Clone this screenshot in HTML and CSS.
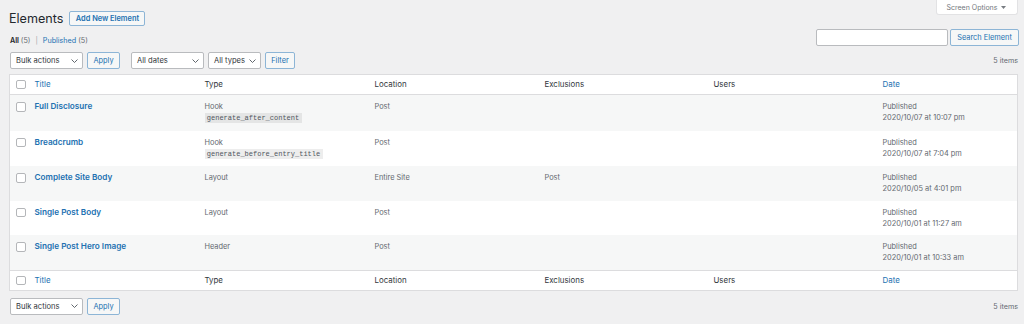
FILE: index.html
```html
<!DOCTYPE html>
<html lang="en">
<head>
<meta charset="utf-8">
<title>Elements</title>
<link rel="stylesheet" href="styles.css">
</head>
<body>
<div class="wrap">
  <div class="top">
    <div class="top-left">
      <div class="heading-row">
        <h1 class="page-title">Elements</h1>
        <a class="btn btn-add">Add New Element</a>
      </div>
      <ul class="subsubsub">
        <li class="current">All <span class="count">(5)</span></li>
        <li class="sep">|</li>
        <li><a class="link">Published</a> <span class="count">(5)</span></li>
      </ul>
    </div>
    <div class="top-right">
      <div class="screen-options">Screen Options
        <svg class="tri" width="5" height="3" viewBox="0 0 5 3"><polygon points="0,0 5,0 2.5,3" fill="#787c82"/></svg>
      </div>
      <div class="search-box">
        <div class="search-input"></div>
        <a class="btn">Search Element</a>
      </div>
    </div>
  </div>

  <div class="tablenav">
    <div class="group">
      <div class="select w-bulk"><span>Bulk actions</span><svg class="chev" width="7" height="4" viewBox="0 0 7 4"><polyline points="0.5,0.5 3.5,3.5 6.5,0.5" fill="none" stroke="#50575e" stroke-width="0.9"/></svg></div>
      <a class="btn btn-apply">Apply</a>
    </div>
    <div class="group group-filters">
      <div class="select w-dates"><span>All dates</span><svg class="chev" width="7" height="4" viewBox="0 0 7 4"><polyline points="0.5,0.5 3.5,3.5 6.5,0.5" fill="none" stroke="#50575e" stroke-width="0.9"/></svg></div>
      <div class="select w-types"><span>All types</span><svg class="chev" width="7" height="4" viewBox="0 0 7 4"><polyline points="0.5,0.5 3.5,3.5 6.5,0.5" fill="none" stroke="#50575e" stroke-width="0.9"/></svg></div>
      <a class="btn btn-filter">Filter</a>
    </div>
    <div class="num">5 items</div>
  </div>

  <table class="widefat">
    <colgroup>
      <col class="c-cb"><col class="c-col"><col class="c-col"><col class="c-col"><col class="c-col2"><col class="c-col2"><col>
    </colgroup>
    <thead>
      <tr>
        <th class="cb"><span class="checkbox"></span></th>
        <th><a class="link">Title</a></th>
        <th>Type</th>
        <th>Location</th>
        <th>Exclusions</th>
        <th>Users</th>
        <th><a class="link">Date</a></th>
      </tr>
    </thead>
    <tbody>
      <tr class="alt">
        <td class="cb"><span class="checkbox"></span></td>
        <td><a class="row-title">Full Disclosure</a></td>
        <td>Hook<br><code>generate_after_content</code></td>
        <td>Post</td>
        <td></td>
        <td></td>
        <td>Published<br>2020/10/07 at 10:07 pm</td>
      </tr>
      <tr>
        <td class="cb"><span class="checkbox"></span></td>
        <td><a class="row-title">Breadcrumb</a></td>
        <td>Hook<br><code>generate_before_entry_title</code></td>
        <td>Post</td>
        <td></td>
        <td></td>
        <td>Published<br>2020/10/07 at 7:04 pm</td>
      </tr>
      <tr class="alt">
        <td class="cb"><span class="checkbox"></span></td>
        <td><a class="row-title">Complete Site Body</a></td>
        <td>Layout</td>
        <td>Entire Site</td>
        <td>Post</td>
        <td></td>
        <td>Published<br>2020/10/05 at 4:01 pm</td>
      </tr>
      <tr>
        <td class="cb"><span class="checkbox"></span></td>
        <td><a class="row-title">Single Post Body</a></td>
        <td>Layout</td>
        <td>Post</td>
        <td></td>
        <td></td>
        <td>Published<br>2020/10/01 at 11:27 am</td>
      </tr>
      <tr class="alt">
        <td class="cb"><span class="checkbox"></span></td>
        <td><a class="row-title">Single Post Hero Image</a></td>
        <td>Header</td>
        <td>Post</td>
        <td></td>
        <td></td>
        <td>Published<br>2020/10/01 at 10:33 am</td>
      </tr>
    </tbody>
    <tfoot>
      <tr>
        <th class="cb"><span class="checkbox"></span></th>
        <th><a class="link">Title</a></th>
        <th>Type</th>
        <th>Location</th>
        <th>Exclusions</th>
        <th>Users</th>
        <th><a class="link">Date</a></th>
      </tr>
    </tfoot>
  </table>

  <div class="tablenav tablenav-bottom">
    <div class="group">
      <div class="select w-bulk"><span>Bulk actions</span><svg class="chev" width="7" height="4" viewBox="0 0 7 4"><polyline points="0.5,0.5 3.5,3.5 6.5,0.5" fill="none" stroke="#50575e" stroke-width="0.9"/></svg></div>
      <a class="btn btn-apply">Apply</a>
    </div>
    <div class="num">5 items</div>
  </div>
</div>
</body>
</html>
```

FILE: styles.css
```css
html, body {
  margin: 0;
  padding: 0;
}
body {
  background: #f0f0f1;
  font-family: Inter, "Noto Sans", sans-serif;
  color: #3c434a;
  font-size: 7.4px;
}
.wrap {
  padding: 0 6px 0 9px;
}
.top {
  display: flex;
  justify-content: space-between;
  align-items: flex-start;
}
.top-left {
  padding-top: 10px;
}
.heading-row {
  display: flex;
  align-items: center;
  height: 17px;
  gap: 6px;
}
.page-title {
  margin: 0;
  font-size: 12.6px;
  font-weight: 400;
  line-height: 17px;
  color: #23282d;
}
.btn {
  display: flex;
  align-items: center;
  justify-content: center;
  box-sizing: border-box;
  height: 17px;
  border: 1px solid #8db5d6;
  border-radius: 2px;
  background: #f6f7f7;
  color: #2271b1;
  font-size: 7.4px;
  white-space: nowrap;
}
.btn-add {
  height: 15px;
  width: 76px;
  font-weight: 600;
}
.subsubsub {
  list-style: none;
  margin: 9px 0 0 1px;
  padding: 0;
  display: flex;
  gap: 3px;
  font-size: 7.2px;
  line-height: 10px;
  color: #646970;
}
.subsubsub .current {
  color: #1d2327;
  font-weight: 600;
}
.subsubsub .current .count {
  font-weight: 400;
  color: #646970;
}
.subsubsub .sep {
  color: #a7aaad;
  padding: 0 2px;
}
.link {
  color: #2271b1;
}
.top-right {
  display: flex;
  flex-direction: column;
  align-items: flex-end;
}
.screen-options {
  box-sizing: border-box;
  height: 15px;
  width: 82px;
  display: flex;
  align-items: center;
  gap: 4px;
  padding-left: 9.5px;
  background: #fff;
  border: 1px solid #e2e2e4;
  border-top: none;
  border-radius: 0 0 3px 3px;
  color: #72777c;
  font-size: 7px;
}
.search-box {
  display: flex;
  gap: 2px;
  margin-top: 14px;
  margin-right: -1px;
}
.search-input {
  box-sizing: border-box;
  width: 132px;
  height: 17px;
  background: #fff;
  border: 1px solid #b9bbbe;
  border-radius: 2px;
}
.search-box .btn {
  width: 69px;
}
.tablenav {
  display: flex;
  align-items: center;
  height: 17px;
  margin-top: 6px;
  padding-left: 1px;
}
.tablenav-bottom {
  margin-top: 7px;
}
.group {
  display: flex;
  gap: 4px;
}
.group-filters {
  margin-left: 11px;
}
.select {
  box-sizing: border-box;
  height: 17px;
  display: flex;
  align-items: center;
  justify-content: space-between;
  padding: 0 4.5px 0 5px;
  background: #fff;
  border: 1px solid #b9bbbe;
  border-radius: 2px;
  color: #32373c;
  font-size: 7.6px;
}
.w-bulk { width: 73px; }
.w-dates { width: 73px; }
.w-types { width: 53px; }
.btn-apply { width: 33px; }
.btn-filter { width: 30px; }
.num {
  margin-left: auto;
  color: #646970;
  font-size: 7.2px;
}
.widefat {
  width: 100%;
  table-layout: fixed;
  border-collapse: collapse;
  border-spacing: 0;
  background: #fff;
  border: 1px solid #dcdcde;
  margin-top: 5px;
}
.c-cb { width: 25px; }
.c-col { width: 170px; }
.c-col2 { width: 169px; }
th, td {
  padding: 0;
  text-align: left;
  font-weight: 400;
}
thead th, tfoot th {
  height: 19px;
  font-size: 7.9px;
  line-height: 11px;
  color: #32373c;
  vertical-align: middle;
}
thead tr {
  border-bottom: 1px solid #dcdcde;
}
tfoot tr {
  border-top: 1px solid #dcdcde;
}
tbody td {
  vertical-align: top;
  padding-top: 6px;
  padding-bottom: 6.6px;
  line-height: 11px;
  font-size: 7.4px;
  color: #646970;
}
tbody tr.alt {
  background: #f6f7f7;
}
.cb {
  padding-left: 6px;
}
tbody td.cb {
  padding-top: 7px;
}
.checkbox {
  display: block;
  box-sizing: border-box;
  width: 9.5px;
  height: 9.5px;
  background: #fff;
  border: 1px solid #b4b6b9;
  border-radius: 2px;
}
.row-title {
  color: #2271b1;
  font-weight: 600;
  font-size: 8.2px;
}
code {
  font-family: "Liberation Mono", "DejaVu Sans Mono", monospace;
  font-size: 7px;
  padding: 1px 2.3px;
  background: rgba(0, 0, 0, 0.07);
  color: #50575e;
}
```
